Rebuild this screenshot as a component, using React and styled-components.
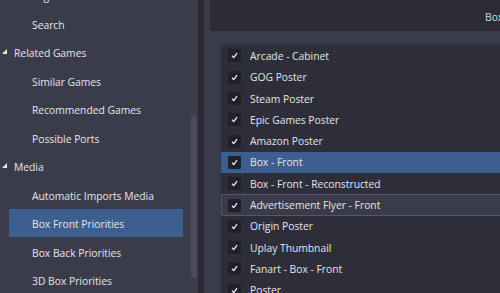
import styled, { createGlobalStyle } from "styled-components";

const GlobalStyle = createGlobalStyle`
  html, body {
    margin: 0;
    padding: 0;
    background: #3b3c4a;
  }
  * {
    box-sizing: border-box;
  }
`;

const Window = styled.div`
  display: flex;
  width: 500px;
  height: 293px;
  overflow: hidden;
  font-family: "Open Sans", "Noto Sans", sans-serif;
  font-size: 10.3px;
  color: #e6e6ea;
`;

const Sidebar = styled.div`
  width: 198px;
  flex-shrink: 0;
  display: flex;
  background: #3b3c4a;
  overflow: hidden;
`;

const Tree = styled.div`
  flex: 1;
  display: flex;
  flex-direction: column;
  margin-top: -19.5px;
`;

const TreeItem = styled.div`
  display: flex;
  height: 28.5px;
  flex-shrink: 0;
`;

const Expander = styled.div`
  width: 9px;
  display: flex;
  align-items: center;
  justify-content: center;
  padding-bottom: 1px;
`;

const TreeLabel = styled.div`
  flex: 1;
  margin-right: 7px;
  display: flex;
  align-items: center;
  padding-top: 3px;
  padding-left: ${(p) => (p.$child ? "23px" : "5px")};
  background: ${(p) => (p.$selected ? "#3d5f8f" : "transparent")};
  white-space: nowrap;
`;

const ScrollTrack = styled.div`
  width: 8px;
  padding: 115px 1px 0 1px;
`;

const ScrollThumb = styled.div`
  height: 163px;
  width: 6px;
  border-radius: 3px;
  background: #4a4b5c;
`;

const Divider = styled.div`
  width: 6px;
  flex-shrink: 0;
  background: #2a2a35;
`;

const Main = styled.div`
  flex: 1;
  min-width: 0;
  display: flex;
  flex-direction: column;
  background: #3b3c4a;
  padding-left: 6px;
  overflow: hidden;
`;

const Header = styled.div`
  height: 31px;
  flex-shrink: 0;
  background: #2b2c37;
  display: flex;
  align-items: center;
  padding-left: 275px;
  padding-top: 2px;
  white-space: nowrap;
  overflow: hidden;
  color: #dcdce2;
`;

const Content = styled.div`
  flex: 1;
  min-width: 0;
  padding: 13px 0 0 10px;
  display: flex;
`;

const List = styled.div`
  flex: 1;
  min-width: 0;
  background: #2d2e3a;
  border-top: 1px solid #353644;
  border-left: 1px solid #353644;
  padding-top: 0.3px;
  display: flex;
  flex-direction: column;
  overflow: hidden;
`;

const Row = styled.div`
  height: 21.3px;
  flex-shrink: 0;
  display: flex;
  align-items: center;
  padding-left: 6px;
  gap: 9px;
  white-space: nowrap;
  background: ${(p) =>
    p.$selected ? "#3d5f8f" : p.$hover ? "#3a3b4a" : "transparent"};
  border: 1px solid ${(p) => (p.$hover ? "#565768" : "transparent")};
  border-right: none;
  border-radius: ${(p) => (p.$hover ? "2px 0 0 2px" : "0")};
`;

const Check = styled.div`
  width: 13px;
  height: 13px;
  background: #1f2029;
  border-radius: 1px;
  display: flex;
  align-items: center;
  justify-content: center;
`;

const ExpandGlyph = () => (
  <svg width="5" height="5" viewBox="0 0 5 5">
    <polygon points="5,0 5,5 0,5" fill="#e6e6ea" />
  </svg>
);

const CheckMark = () => (
  <svg width="9" height="9" viewBox="0 0 9 9">
    <polyline
      points="2,4.8 3.8,6.6 7,2.2"
      fill="none"
      stroke="#f2f2f5"
      strokeWidth="1.3"
    />
  </svg>
);

const treeItems = [
  { label: "Tags", child: true },
  { label: "Search", child: true },
  { label: "Related Games", parent: true },
  { label: "Similar Games", child: true },
  { label: "Recommended Games", child: true },
  { label: "Possible Ports", child: true },
  { label: "Media", parent: true },
  { label: "Automatic Imports Media", child: true },
  { label: "Box Front Priorities", child: true, selected: true },
  { label: "Box Back Priorities", child: true },
  { label: "3D Box Priorities", child: true },
];

const rows = [
  "Arcade - Cabinet",
  "GOG Poster",
  "Steam Poster",
  "Epic Games Poster",
  "Amazon Poster",
  "Box - Front",
  "Box - Front - Reconstructed",
  "Advertisement Flyer - Front",
  "Origin Poster",
  "Uplay Thumbnail",
  "Fanart - Box - Front",
  "Poster",
];

export default function App() {
  return (
    <>
      <GlobalStyle />
      <Window>
        <Sidebar>
          <Tree>
            {treeItems.map((item) => (
              <TreeItem key={item.label}>
                <Expander>{item.parent && <ExpandGlyph />}</Expander>
                <TreeLabel $child={item.child} $selected={item.selected}>
                  {item.label}
                </TreeLabel>
              </TreeItem>
            ))}
          </Tree>
          <ScrollTrack>
            <ScrollThumb />
          </ScrollTrack>
        </Sidebar>
        <Divider />
        <Main>
          <Header>Box Front Priorities</Header>
          <Content>
            <List>
              {rows.map((r, i) => (
                <Row key={r} $selected={i === 5} $hover={i === 7}>
                  <Check>
                    <CheckMark />
                  </Check>
                  {r}
                </Row>
              ))}
            </List>
          </Content>
        </Main>
      </Window>
    </>
  );
}
